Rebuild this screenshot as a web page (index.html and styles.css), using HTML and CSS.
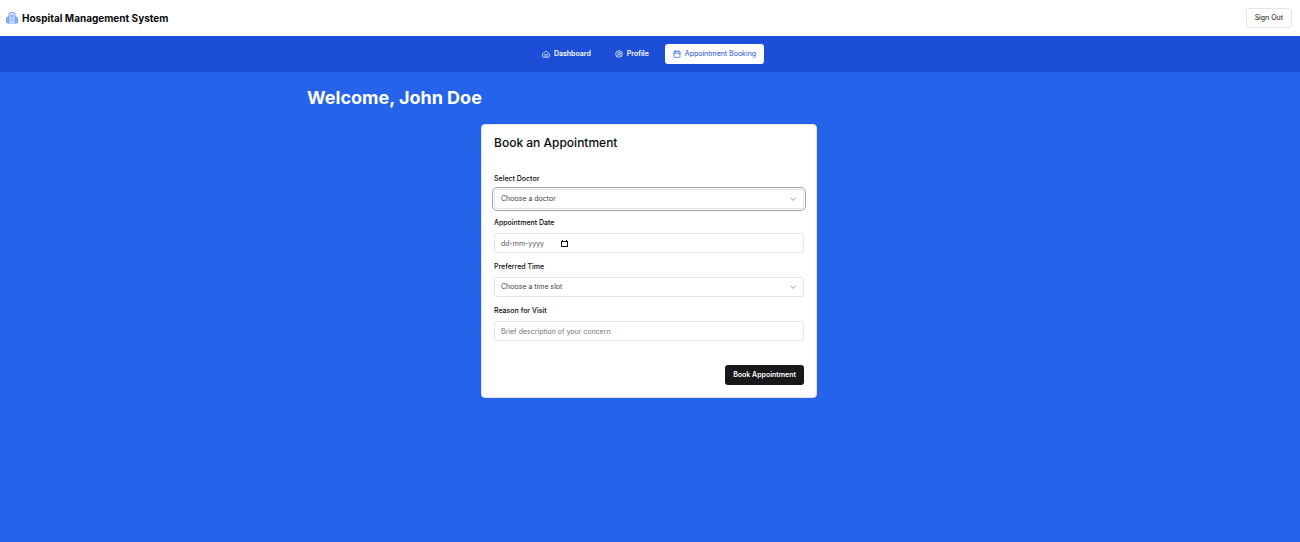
FILE: index.html
```html
<!DOCTYPE html>
<html lang="en">
<head>
<meta charset="utf-8">
<title>Hospital Management System</title>
<link rel="stylesheet" href="styles.css">
</head>
<body>
<header class="topbar">
  <div class="brand">
    <svg class="brand-icon" viewBox="0 0 24 24" aria-hidden="true"><path class="brand-wings" d="M6 10H4a3 3 0 0 0-3 3v7a2 2 0 0 0 2 2h18a2 2 0 0 0 2-2v-7a3 3 0 0 0-3-3h-2"/><path class="brand-tower" d="M6 22V5a4 4 0 0 1 4-4h4a4 4 0 0 1 4 4v17"/><path d="M12 6v5M9 8h6M10 14h4M10 18h4"/></svg>
    <span>Hospital Management System</span>
  </div>
  <button class="sign-out" type="button">Sign Out</button>
</header>
<nav class="tabs">
  <a class="tab" href="#dashboard">
    <svg class="tab-icon" viewBox="0 0 24 24" aria-hidden="true"><path d="M2 11l10-8 10 8v9a2 2 0 0 1-2 2H4a2 2 0 0 1-2-2zM8 13h8M6 18h12"/></svg>
    <span>Dashboard</span>
  </a>
  <a class="tab" href="#profile">
    <svg class="tab-icon" viewBox="0 0 24 24" aria-hidden="true"><circle cx="12" cy="12" r="10"/><circle cx="12" cy="10" r="4"/><path d="M6 20c0-4 3-6 6-6s6 2 6 6"/></svg>
    <span>Profile</span>
  </a>
  <a class="tab tab-active" href="#booking" aria-current="page">
    <svg class="tab-icon" viewBox="0 0 24 24" aria-hidden="true"><rect x="3" y="4" width="18" height="18" rx="2"/><path d="M8 2v4M16 2v4M3 10h18"/></svg>
    <span>Appointment Booking</span>
  </a>
</nav>
<main class="page">
  <h1 class="welcome">Welcome, John Doe</h1>
  <form class="card">
    <h2 class="card-title">Book an Appointment</h2>
    <div class="fields">
      <div class="field">
        <label for="doctor">Select Doctor</label>
        <div class="control control-focused">
          <select id="doctor" class="entry"><option>Choose a doctor</option></select>
          <svg class="chevron" viewBox="0 0 24 24" aria-hidden="true"><path d="M5 9l7 7 7-7"/></svg>
        </div>
      </div>
      <div class="field">
        <label for="date">Appointment Date</label>
        <div class="control">
          <input id="date" class="entry entry-date" type="text" placeholder="dd-mm-yyyy">
          <button class="picker" type="button" aria-label="Open calendar">
            <svg class="picker-icon" viewBox="0 0 7 7" aria-hidden="true"><path d="M1 0h1v1h3V0h1v1h1v6H0V1h1zM1 2v4h5V2z" fill-rule="evenodd"/></svg>
          </button>
        </div>
      </div>
      <div class="field">
        <label for="time">Preferred Time</label>
        <div class="control">
          <select id="time" class="entry"><option>Choose a time slot</option></select>
          <svg class="chevron" viewBox="0 0 24 24" aria-hidden="true"><path d="M5 9l7 7 7-7"/></svg>
        </div>
      </div>
      <div class="field">
        <label for="reason">Reason for Visit</label>
        <div class="control">
          <input id="reason" class="entry" type="text" placeholder="Brief description of your concern">
        </div>
      </div>
    </div>
    <div class="actions"><button class="submit" type="submit">Book Appointment</button></div>
  </form>
</main>
</body>
</html>
```
FILE: styles.css
```css
* { box-sizing: border-box; }
body {
  margin: 0;
  min-height: 100vh;
  background: #2563eb;
  color: #09090b;
  font-family: Inter, "Liberation Sans", sans-serif;
  font-size: 7px;
  line-height: 10px;
}
button, input, select { font: inherit; color: inherit; }
svg { fill: none; stroke: currentColor; stroke-linecap: round; stroke-linejoin: round; flex: none; }

.topbar {
  display: flex;
  align-items: center;
  justify-content: space-between;
  height: 36px;
  padding: 0 8px 0 6px;
  background: #fff;
}
.brand { display: flex; align-items: center; gap: 4px; font-size: 10px; font-weight: 700; }
.brand-icon { width: 12px; height: 12px; color: #6f9bf5; stroke-width: 2; }
.brand-wings { fill: #8fb1f8; }
.brand-tower { fill: #dbe6fd; }
.sign-out {
  height: 20px;
  padding: 0 8px;
  border: 1px solid #e4e4e7;
  border-radius: 3px;
  background: #fff;
  font-weight: 400;
}

.tabs {
  display: flex;
  align-items: center;
  justify-content: center;
  gap: 8px;
  height: 36px;
  padding-right: 2px;
  background: #1d4ed8;
}
.tab {
  display: flex;
  align-items: center;
  gap: 4px;
  height: 20px;
  padding: 0 8px;
  border-radius: 3px;
  color: #fff;
  font-weight: 600;
  text-decoration: none;
}
.tab-active { background: #fff; color: #1d4ed8; font-weight: 400; }
.tab-icon { width: 8px; height: 8px; stroke-width: 2; }

.page { max-width: 702px; margin: 0 auto; padding: 16px 10px 16px 8px; }
.welcome { margin: 0 0 16px; color: #fff; font-size: 18px; font-weight: 700; line-height: 20px; }

.card {
  max-width: 336px;
  margin: 0 auto;
  padding: 12px;
  border: 1px solid #e4e4e7;
  border-radius: 4px;
  background: #fff;
}
.card-title { margin: 0 0 25px; font-size: 12px; font-weight: 500; line-height: 12px; }
.fields { display: flex; flex-direction: column; gap: 9px; }
.field { display: flex; flex-direction: column; gap: 5px; }
.field label { font-weight: 500; }
.control {
  position: relative;
  display: flex;
  align-items: center;
  height: 20px;
  border: 1px solid #e4e4e7;
  border-radius: 3px;
  background: #fff;
}
.control-focused { outline: 1px solid #a1a1aa; outline-offset: 1px; }
.entry {
  width: 100%;
  height: 18px;
  padding: 0 6px;
  border: 0;
  outline: 0;
  background: none;
  appearance: none;
  color: #3f3f46;
}
.entry::placeholder { color: #71717a; opacity: 1; }
.entry-date { width: 66px; }
.entry-date::placeholder { color: #52525b; }
.chevron { position: absolute; right: 6px; width: 8px; height: 8px; color: #71717a; stroke-width: 2; pointer-events: none; }
.picker { display: flex; padding: 0; border: 0; background: none; }
.picker-icon { width: 7px; height: 7px; fill: #18181b; stroke: none; }
.actions { display: flex; justify-content: flex-end; margin-top: 24px; }
.submit {
  height: 20px;
  padding: 0 8px;
  border: 0;
  border-radius: 3px;
  background: #18181b;
  color: #fff;
  font-weight: 600;
}
```
